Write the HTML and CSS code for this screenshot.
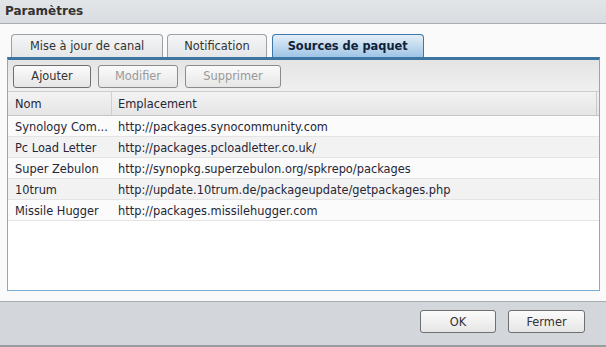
FILE: index.html
```html
<!DOCTYPE html>
<html lang="fr">
<head>
    <meta charset="UTF-8">
    <title>Paramètres</title>
    <link rel="stylesheet" href="styles.css">
</head>
<body>
    <div class="window">
        <div class="titlebar">Paramètres</div>
        <div class="content">
            <div class="tabs">
                <div class="tab">Mise à jour de canal</div>
                <div class="tab tab-notif">Notification</div>
                <div class="tab active">Sources de paquet</div>
            </div>
            <div class="panel">
                <div class="toolbar">
                    <button class="btn btn-add">Ajouter</button>
                    <button class="btn btn-edit" disabled>Modifier</button>
                    <button class="btn btn-del" disabled>Supprimer</button>
                </div>
                <div class="grid">
                    <div class="row head">
                        <div class="cell name">Nom</div>
                        <div class="cell url">Emplacement</div>
                    </div>
                    <div class="row">
                        <div class="cell name">Synology Com...</div>
                        <div class="cell url">http://packages.synocommunity.com</div>
                    </div>
                    <div class="row alt">
                        <div class="cell name">Pc Load Letter</div>
                        <div class="cell url">http://packages.pcloadletter.co.uk/</div>
                    </div>
                    <div class="row">
                        <div class="cell name">Super Zebulon</div>
                        <div class="cell url">http://synopkg.superzebulon.org/spkrepo/packages</div>
                    </div>
                    <div class="row alt">
                        <div class="cell name">10trum</div>
                        <div class="cell url">http://update.10trum.de/packageupdate/getpackages.php</div>
                    </div>
                    <div class="row">
                        <div class="cell name">Missile Hugger</div>
                        <div class="cell url">http://packages.missilehugger.com</div>
                    </div>
                </div>
            </div>
        </div>
        <div class="footer">
            <button class="btn btn-ok">OK</button>
            <button class="btn btn-close">Fermer</button>
        </div>
    </div>
</body>
</html>
```

FILE: styles.css
```css
* {
    margin: 0;
    padding: 0;
    box-sizing: border-box;
}
html, body {
    height: 100%;
    width: 100%;
    font-family: "DejaVu Sans", Verdana, sans-serif;
    font-size: 11.4px;
    color: #262636;
    background-color: #fafafa;
}
.window {
    height: 347px;
    display: flex;
    flex-direction: column;
}
.titlebar {
    height: 24px;
    padding-left: 5px;
    line-height: 23px;
    font-size: 12px;
    font-weight: bold;
    color: #333;
    background: linear-gradient(#e2e5e8, #d9dde1);
    border-bottom: 1px solid #a9acb0;
}
.content {
    flex: 1;
    padding: 10px 6px 10px 7px;
    display: flex;
    flex-direction: column;
}
.tabs {
    display: flex;
    gap: 4px;
    padding-left: 4px;
    height: 23px;
}
.tab {
    height: 23px;
    padding: 0 18px;
    line-height: 23px;
    color: #333;
    border: 1px solid #9ba1a7;
    border-bottom: none;
    border-radius: 4px 4px 0 0;
    background: linear-gradient(#f4f5f6, #e4e6e8);
}
.tab-notif {
    padding: 0 16px;
}
.tab.active {
    margin-left: 1px;
    padding: 0 15px;
    font-weight: bold;
    color: #10223a;
    border-color: #3d78a8;
    background: linear-gradient(#e4eef8, #c3daef 50%, #9ec4e6);
}
.panel {
    flex: 1;
    border: 1px solid #7eadd4;
    border-top: 3px solid #3c74a2;
    box-shadow: inset 0 1px 0 #a9cbe6;
    background-color: #fff;
}
.toolbar {
    height: 32px;
    display: flex;
    gap: 7px;
    align-items: center;
    padding: 1px 5px 0;
    background: linear-gradient(#e4e4e4, #f0f0f0);
    border-bottom: 1px solid #cdcdcd;
}
.btn {
    height: 23px;
    font-family: inherit;
    font-size: 11.4px;
    color: #333;
    border: 1px solid #6f6f6f;
    border-radius: 3px;
    background: linear-gradient(#fbfbfb, #e6e6e6);
}
.btn:disabled {
    color: #9a9a9a;
    border-color: #8c8c8c;
}
.btn-add {
    width: 78px;
}
.btn-edit {
    width: 80px;
}
.btn-del {
    width: 96px;
}
.row {
    display: flex;
    height: 21px;
    line-height: 23px;
    border-bottom: 1px solid #e4e4e4;
    background-color: #fbfbfb;
}
.row.alt {
    background-color: #f2f2f2;
}
.row.head {
    height: 24px;
    line-height: 24px;
    background: linear-gradient(#f3f3f3, #e5e5e5);
    border-bottom: 1px solid #c6c6c6;
}
.cell {
    white-space: nowrap;
    overflow: hidden;
}
.cell.name {
    width: 104px;
    padding-left: 7px;
}
.cell.url {
    flex: 1;
    padding-left: 6px;
}
.row.head .cell.name {
    border-right: 1px solid #d0d0d0;
}
.row.head .cell.url {
    margin-right: 2px;
    border-right: 1px solid #c8c8c8;
}
.footer {
    height: 46px;
    display: flex;
    justify-content: flex-end;
    align-items: center;
    gap: 12px;
    padding: 0 21px 4px 0;
    background-color: #d3d7db;
    border-top: 1px solid #a8acb0;
    border-bottom: 2px solid #9a9da0;
}
.btn-ok {
    width: 76px;
}
.btn-close {
    width: 77px;
}
```
